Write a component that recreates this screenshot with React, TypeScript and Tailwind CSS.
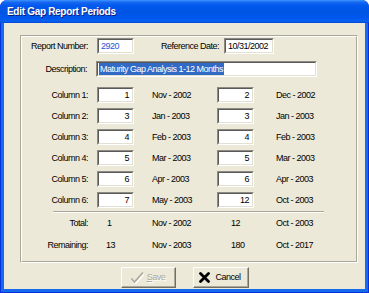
import React from "react";

const body = "font-['Liberation_Sans',Arial,sans-serif] text-[9px] tracking-[-0.5px] leading-none text-black";

function Box({ w, h = "h-[16px]", children, align = "justify-end" }: { w: string; h?: string; children?: React.ReactNode; align?: string }) {
  return (
    <div className={`${w} ${h} shrink-0 border border-t-[#8e8c82] border-l-[#8e8c82] border-r-white border-b-white`}>
      <div className={`w-full h-full flex items-center ${align} bg-white border border-t-[#595959] border-l-[#595959] border-r-[#e2dfd3] border-b-[#e2dfd3] px-[2px]`}>
        {children}
      </div>
    </div>
  );
}

const rows = [
  { a: "1", ad: "Nov - 2002", b: "2", bd: "Dec - 2002" },
  { a: "3", ad: "Jan - 2003", b: "3", bd: "Jan - 2003" },
  { a: "4", ad: "Feb - 2003", b: "4", bd: "Feb - 2003" },
  { a: "5", ad: "Mar - 2003", b: "5", bd: "Mar - 2003" },
  { a: "6", ad: "Apr - 2003", b: "6", bd: "Apr - 2003" },
  { a: "7", ad: "May - 2003", b: "12", bd: "Oct - 2003" },
];

function Btn({ w, children }: { w: string; children: React.ReactNode }) {
  return (
    <div className={`${w} h-[21px] border border-t-white border-l-white border-r-[#716f64] border-b-[#716f64]`}>
      <div className="w-full h-full flex items-center justify-center border-r border-b border-r-[#aca899] border-b-[#aca899] bg-[#ece9d8]">
        {children}
      </div>
    </div>
  );
}

export default function App() {
  return (
    <div className="w-[369px] h-[293px] rounded-t-[7px] overflow-hidden bg-[#0831d9] flex flex-col">
      <div className="h-[23px] shrink-0 flex items-center pl-[7px] bg-[linear-gradient(to_bottom,#3d95ff_0%,#1766f0_10%,#0058ee_25%,#0054e3_55%,#0058ee_80%,#0a62f0_92%,#0043d4_100%)]">
        <span className="font-['Liberation_Sans',Arial,sans-serif] font-bold text-[10px] tracking-[-0.3px] text-white [text-shadow:1px_1px_0_#0a1e80]">
          Edit Gap Report Periods
        </span>
      </div>
      <div className="flex-1 px-[1px] pb-[1px] bg-[#0831d9] flex">
        <div className="flex-1 px-[3px] pb-[3px] bg-[#166aee] flex">
          <div className={`flex-1 bg-[#ece9d8] flex flex-col ${body}`}>
            {/* panel */}
            <div className="ml-[16px] mt-[12px] w-[338px] h-[228px] border border-t-[#aca899] border-l-[#aca899] border-r-white border-b-white">
              <div className="w-full h-full border border-t-white border-l-white border-r-[#aca899] border-b-[#aca899] flex flex-col">
                {/* row 1 */}
                <div className="flex items-center h-[16px] mt-[1px]">
                  <div className="w-[66px] text-right">Report Number:</div>
                  <div className="ml-[9px]">
                    <Box w="w-[37px]" align="justify-start">
                      <span className="text-[#2a55d6]">2920</span>
                    </Box>
                  </div>
                  <div className="w-[85px] text-right">Reference Date:</div>
                  <div className="ml-[5px]">
                    <Box w="w-[50px]" align="justify-start">
                      <span>10/31/2002</span>
                    </Box>
                  </div>
                </div>
                {/* row 2 */}
                <div className="flex items-center h-[16px] mt-[7px]">
                  <div className="w-[65px] text-right">Description:</div>
                  <div className="ml-[9px]">
                    <Box w="w-[221px]" align="justify-start">
                      <span className="bg-[#316ac5] text-white -ml-[1px] px-[1px] h-[12px] flex items-center">
                        Maturity Gap Analysis 1-12 Months
                      </span>
                    </Box>
                  </div>
                </div>
                {/* column rows */}
                <div className="flex flex-col gap-[5px] mt-[10px]">
                  {rows.map((r, i) => (
                    <div key={i} className="flex items-center h-[16px]">
                      <div className="w-[66px] text-right">Column {i + 1}:</div>
                      <div className="ml-[9px]">
                        <Box w="w-[37px]">
                          <span className="pr-[1px]">{r.a}</span>
                        </Box>
                      </div>
                      <div className="ml-[18px] w-[65px] pt-[1px]">{r.ad}</div>
                      <Box w="w-[37px]">
                        <span className="pr-[1px]">{r.b}</span>
                      </Box>
                      <div className="ml-[22px] pt-[1px]">{r.bd}</div>
                    </div>
                  ))}
                </div>
                {/* separator */}
                <div className="ml-[31px] mt-[3px] w-[271px] h-[2px] border-t border-b border-t-[#aca899] border-b-white" />
                {/* totals */}
                <div className="flex items-center h-[20px]">
                  <div className="w-[66px] text-right">Total:</div>
                  <div className="w-[64px] pl-[19px]">1</div>
                  <div className="w-[79px]">Nov - 2002</div>
                  <div className="w-[45px]">12</div>
                  <div>Oct - 2003</div>
                </div>
                <div className="flex items-center h-[20px] mt-[2px]">
                  <div className="w-[66px] text-right">Remaining:</div>
                  <div className="w-[64px] pl-[18px]">13</div>
                  <div className="w-[79px]">Nov - 2003</div>
                  <div className="w-[45px]">180</div>
                  <div>Oct - 2017</div>
                </div>
              </div>
            </div>
            {/* buttons */}
            <div className="flex justify-center gap-[17px] mt-[4px]">
              <Btn w="w-[55px]">
                <div className="flex items-center gap-[3px]">
                  <svg width="14" height="13" viewBox="0 0 14 13">
                    <path d="M2 8 L5 11.5 L13.5 2" fill="none" stroke="#ffffff" strokeWidth="1.6" transform="translate(0.8,0.8)" />
                    <path d="M1.5 7.5 L4.5 11 L13 1.5" fill="none" stroke="#aca899" strokeWidth="1.6" />
                  </svg>
                  <span className="text-[#aca899] [text-shadow:1px_1px_0_#ffffff]">
                    <span className="underline">S</span>ave
                  </span>
                </div>
              </Btn>
              <Btn w="w-[56px]">
                <div className="flex items-center gap-[5px]">
                  <svg width="11" height="11" viewBox="0 0 11 11">
                    <path d="M1.5 1.5 L9.5 9.5 M9.5 1.5 L1.5 9.5" stroke="#000" strokeWidth="2.8" strokeLinecap="round" />
                  </svg>
                  <span>Cancel</span>
                </div>
              </Btn>
            </div>
          </div>
        </div>
      </div>
    </div>
  );
}
